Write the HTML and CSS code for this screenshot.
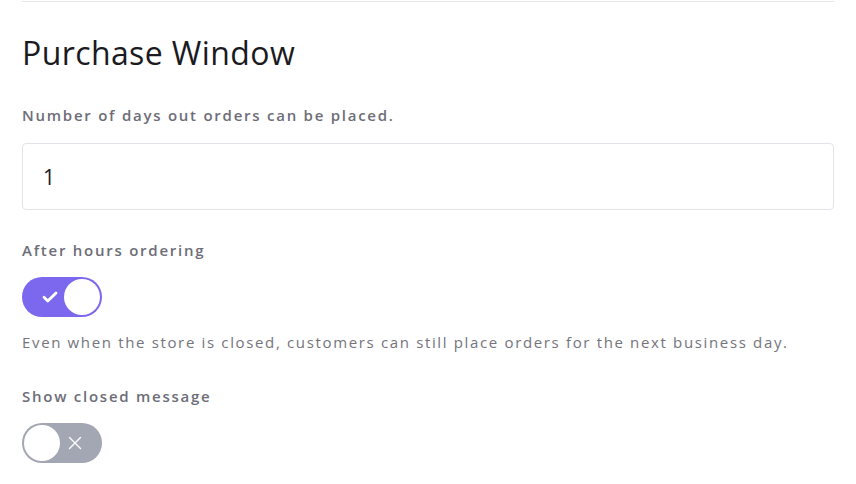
FILE: index.html
```html
<!DOCTYPE html>
<html>
<head>
<meta charset="utf-8">
<link rel="stylesheet" href="styles.css">
</head>
<body>
<div class="page">
  <div class="divider"></div>
  <h2 class="title">Purchase Window</h2>
  <div class="field">
    <label class="label">Number of days out orders can be placed.</label>
    <div class="input">1</div>
  </div>
  <div class="field">
    <div class="label">After hours ordering</div>
    <div class="toggle on">
      <svg class="icon check" viewBox="0 0 16 12" width="16" height="12"><path d="M2 6.3l3.8 3.7 8.2-8" fill="none" stroke="#fff" stroke-width="2.8" stroke-linecap="round" stroke-linejoin="round"/></svg>
      <span class="knob"></span>
    </div>
    <p class="help">Even when the store is closed, customers can still place orders for the next business day.</p>
  </div>
  <div class="field last">
    <div class="label">Show closed message</div>
    <div class="toggle off">
      <span class="knob"></span>
      <svg class="icon cross" viewBox="0 0 14 14" width="14" height="14"><path d="M1.5 1.5l11 11M12.5 1.5l-11 11" fill="none" stroke="#fff" stroke-width="1.4" stroke-linecap="round"/></svg>
    </div>
  </div>
</div>
</body>
</html>
```
FILE: styles.css
```css
html, body {
  margin: 0;
  padding: 0;
  background: #fff;
}
body {
  font-family: "Open Sans", "Noto Sans", sans-serif;
  color: #1d1d22;
}
.page {
  padding: 1px 22px 0 22px;
}
.divider {
  height: 1px;
  background: #e6e6ea;
}
.title {
  margin: 32px 0 0 0;
  font-size: 32px;
  font-weight: 400;
  letter-spacing: 0.4px;
  line-height: 38px;
  color: #1b1b1f;
}
.field {
  margin-top: 33px;
}
.label {
  display: block;
  font-size: 15px;
  font-weight: 600;
  letter-spacing: 1.75px;
  color: #6d6d77;
  line-height: 20px;
}
.input {
  margin-top: 18px;
  height: 67px;
  border: 1px solid #e3e3ea;
  border-radius: 4px;
  box-sizing: border-box;
  display: flex;
  align-items: center;
  padding-left: 20px;
  font-size: 21px;
  color: #1b1b1f;
}
.field + .field {
  margin-top: 30px;
}
.field + .field.last {
  margin-top: 34px;
}
.toggle {
  margin-top: 17px;
  width: 80px;
  height: 40px;
  border-radius: 20px;
  box-sizing: border-box;
  display: flex;
  align-items: center;
  padding: 2px;
}
.toggle .knob {
  width: 36px;
  height: 36px;
  border-radius: 50%;
  background: #fff;
}
.toggle.on {
  background: #7b68ee;
  justify-content: space-between;
  padding-left: 20px;
}
.toggle.off {
  background: #a3a6b3;
  justify-content: space-between;
  padding-right: 20px;
}
.help {
  margin: 15px 0 0 0;
  font-size: 15px;
  letter-spacing: 1.65px;
  color: #74747c;
  line-height: 20px;
}
```
